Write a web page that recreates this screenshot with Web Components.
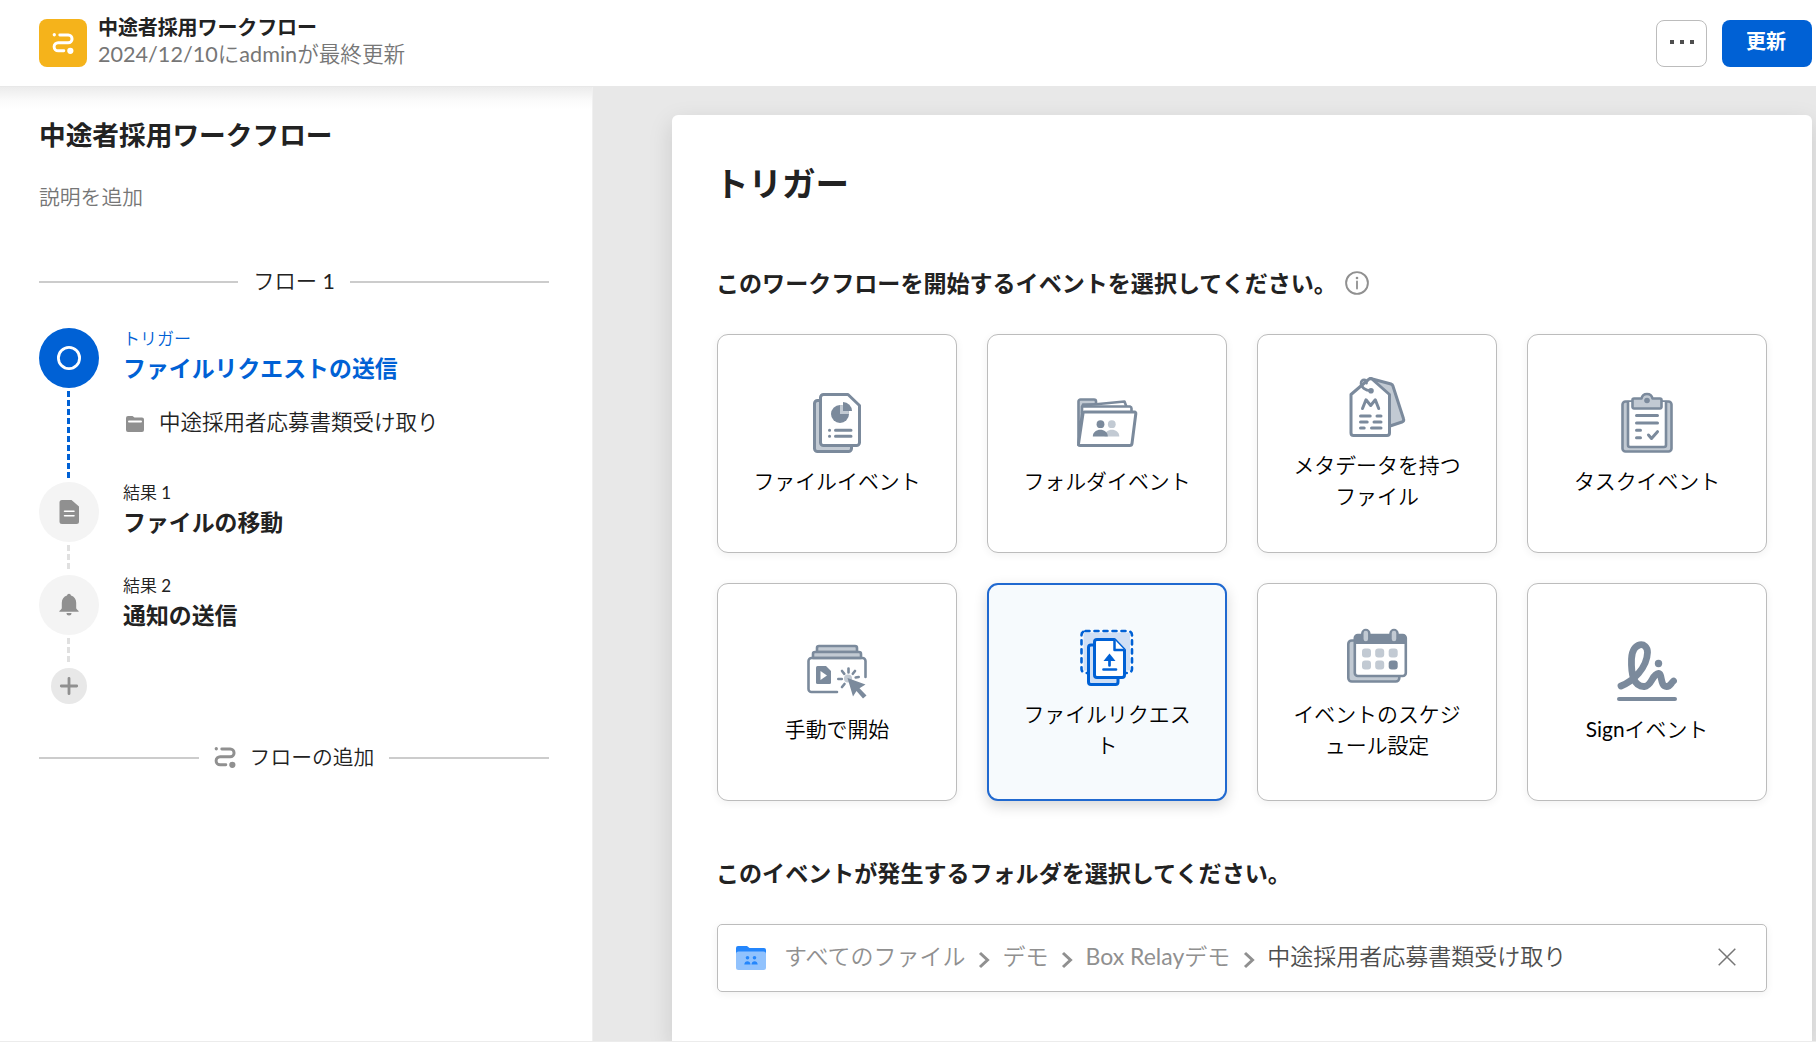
<!DOCTYPE html>
<html lang="ja">
<head>
<meta charset="utf-8">
<title>中途者採用ワークフロー</title>
<style>
  body {
    --bold-font: Lato, "Noto Sans CJK JP", sans-serif;
    margin: 0;
    height: 1042px;
    overflow: hidden;
    background: #fff;
    color: #222;
    font-family: Lato, "Noto Sans CJK JP DemiLight", "Noto Sans CJK JP Light", "Noto Sans CJK JP", sans-serif;
  }
</style>
</head>
<body>

<template id="relay-app-template">
  <style>
    :host {
      display: flex;
      flex-direction: column;
      height: 1042px;
    }
    .body {
      display: flex;
      flex: 1;
      min-height: 0;
      border-bottom: 1px solid #ececec;
    }
  </style>
  <slot name="header"></slot>
  <div class="body"><slot></slot></div>
</template>

<template id="relay-header-template">
  <style>
    :host {
      display: flex;
      align-items: center;
      box-sizing: border-box;
      height: 87px;
      flex: none;
      padding: 0 4px 0 39px;
      border-bottom: 1px solid #e8e8e8;
      background: #fff;
    }
    .logo {
      display: flex;
      align-items: center;
      justify-content: center;
      width: 48px;
      height: 48px;
      border-radius: 8px;
      background: #f5b31b;
      color: #fff;
    }
    .text {
      flex: 1;
      margin-left: 11px;
      padding-bottom: 5px;
    }
    .title {
      font-family: var(--bold-font);
      font-size: 20px;
      line-height: 26px;
      font-weight: 700;
      letter-spacing: -0.1px;
    }
    .updated {
      font-size: 21.6px;
      line-height: 28px;
      color: #767676;
    }
    .actions {
      display: flex;
      gap: 15px;
    }
  </style>
  <div class="logo"><relay-icon name="relay" size="22"></relay-icon></div>
  <div class="text">
    <div class="title"><slot name="title"></slot></div>
    <div class="updated"><slot name="updated"></slot></div>
  </div>
  <div class="actions"><slot name="actions"></slot></div>
</template>

<template id="relay-button-template">
  <style>
    :host {
      display: flex;
      align-items: center;
      justify-content: center;
      box-sizing: border-box;
      width: 51px;
      height: 47px;
      border: 1px solid #bcbcbc;
      border-radius: 8px;
      background: #fff;
      color: #4e4e4e;
      cursor: pointer;
    }
    :host([primary]) {
      width: 90px;
      padding: 0 2px 6px 0;
      border: 0;
      background: #0061d5;
      color: #fff;
      font-family: var(--bold-font);
      font-size: 20px;
      font-weight: 700;
    }
  </style>
  <slot></slot>
</template>

<template id="relay-sidebar-template">
  <style>
    :host {
      display: block;
      box-sizing: border-box;
      width: 593px;
      flex: none;
      padding: 30px 44px 0 39px;
      border-right: 1px solid #f0f0f0;
      background: linear-gradient(#ececec, #fafafa 13px, #fff 22px);
    }
    .title {
      font-family: var(--bold-font);
      font-size: 26.7px;
      line-height: 36px;
      font-weight: 700;
    }
    .description {
      margin-top: 28px;
      font-size: 20.8px;
      line-height: 32px;
      color: #767676;
    }
    .flow {
      margin: 52px -1px 0 0;
    }
  </style>
  <div class="title"><slot name="title"></slot></div>
  <div class="description"><slot name="description"></slot></div>
  <div class="flow"><slot></slot></div>
</template>

<template id="relay-divider-template">
  <style>
    :host {
      display: flex;
      align-items: center;
      height: 32px;
      gap: 15px;
      font-size: 20.8px;
      line-height: 30px;
    }
    :host::before, :host::after {
      content: "";
      flex: 1;
      height: 2px;
      margin-top: 2px;
      background: #ccc;
    }
    .label {
      display: flex;
      align-items: center;
      gap: 14px;
    }
    ::slotted(relay-icon) {
      color: #909090;
    }
  </style>
  <div class="label"><slot></slot></div>
</template>

<template id="relay-step-template">
  <style>
    :host {
      display: flex;
      box-sizing: border-box;
      height: 93px;
      --fill: #f4f4f4;
      --dash: #e0e0e0;
    }
    :host([active]) {
      height: 154px;
      --fill: #0061d5;
      --dash: #0061d5;
    }
    .rail {
      display: flex;
      flex-direction: column;
      align-items: center;
      width: 60px;
    }
    .dot {
      display: flex;
      align-items: center;
      justify-content: center;
      width: 60px;
      height: 60px;
      border-radius: 50%;
      background: var(--fill);
      color: #909090;
    }
    :host([active]) .dot {
      color: #fff;
    }
    .line {
      flex: 1;
      width: 3px;
      margin: 3px 1px 4px 0;
      background: repeating-linear-gradient(var(--dash) 0 6px, transparent 6px 9px);
    }
    .text {
      margin-left: 24px;
    }
    .label {
      font-size: 17px;
      line-height: 22px;
    }
    .name {
      font-family: var(--bold-font);
      font-size: 22.9px;
      line-height: 36px;
      font-weight: 700;
    }
    :host([active]) .label, :host([active]) .name {
      color: #0061d5;
    }
    .detail {
      display: flex;
      align-items: center;
      margin: 20px 0 0 3px;
      gap: 15px;
      font-size: 21.5px;
      line-height: 32px;
    }
    :host(:not([active])) .detail {
      display: none;
    }
  </style>
  <div class="rail">
    <div class="dot"><slot name="icon"></slot></div>
    <div class="line"></div>
  </div>
  <div class="text">
    <div class="label"><slot name="label"></slot></div>
    <div class="name"><slot></slot></div>
    <div class="detail"><slot name="detail"></slot></div>
  </div>
</template>

<template id="relay-add-template">
  <style>
    :host {
      display: flex;
      align-items: center;
      justify-content: center;
      width: 36px;
      height: 36px;
      margin: 0 0 37px 12px;
      border-radius: 50%;
      background: #e8e8e8;
      color: #909090;
    }
  </style>
  <relay-icon name="plus" size="18"></relay-icon>
</template>

<template id="relay-canvas-template">
  <style>
    :host {
      display: flex;
      flex: 1;
      padding: 28px 4px 0 79px;
      background: #e8e8e8;
      overflow: hidden;
    }
    .panel {
      flex: 1;
      box-sizing: border-box;
      padding: 45px 45px 0;
      border-radius: 6px 6px 0 0;
      background: #fff;
      box-shadow: 0 8px 24px rgba(0, 0, 0, .13);
    }
    h1 {
      margin: 0 0 0 -2px;
      font-family: var(--bold-font);
      font-size: 33.5px;
      line-height: 46px;
      font-weight: 700;
    }
  </style>
  <div class="panel">
    <h1><slot name="title"></slot></h1>
    <slot></slot>
  </div>
</template>

<template id="relay-section-template">
  <style>
    :host {
      display: block;
      margin-top: 61px;
    }
    .heading {
      display: flex;
      align-items: center;
      gap: 8px;
      height: 32px;
      margin-left: -1px;
      font-family: var(--bold-font);
      font-size: 23.05px;
      line-height: 30px;
      font-weight: 700;
      color: #222;
    }
    .content {
      margin-top: 35px;
    }
  </style>
  <div class="heading"><slot name="heading"></slot></div>
  <div class="content"><slot></slot></div>
</template>

<template id="relay-card-grid-template">
  <style>
    :host {
      display: grid;
      grid-template-columns: repeat(4, 240px);
      grid-template-rows: 219px 218px;
      gap: 30px;
    }
  </style>
  <slot></slot>
</template>

<template id="relay-card-template">
  <style>
    :host {
      display: flex;
      flex-direction: column;
      align-items: center;
      justify-content: center;
      gap: 12px;
      box-sizing: border-box;
      padding-top: 1px;
      border: 1px solid #bcbcbc;
      border-radius: 11px;
      background: #fff;
      box-shadow: 0 2px 8px rgba(0, 0, 0, .06);
      color: #000;
    }
    :host([selected]) {
      border: 2px solid #2069d0;
      background: #f6fafd;
      box-shadow: 0 5px 14px rgba(0, 0, 0, .16);
    }
    .label {
      width: 176px;
      font-size: 20.9px;
      line-height: 31px;
      text-align: center;
      line-break: loose;
    }
  </style>
  <relay-icon size="60"></relay-icon>
  <div class="label"><slot></slot></div>
</template>

<template id="relay-path-template">
  <style>
    :host {
      display: flex;
      align-items: center;
      box-sizing: border-box;
      height: 68px;
      padding: 0 30px 0 18px;
      border: 1px solid #bcbcbc;
      border-radius: 5px;
      background: #fff;
      box-shadow: 0 2px 8px rgba(0, 0, 0, .06);
      font-size: 23px;
      line-height: 32px;
      color: #909090;
    }
    .crumbs {
      display: flex;
      align-items: center;
      flex: 1;
      margin-left: 18px;
      padding-bottom: 4px;
      gap: 12.5px;
    }
    .crumbs relay-icon {
      margin-top: 7px;
    }
    .crumbs span:last-child {
      color: #4e4e4e;
    }
    .close {
      color: #767676;
      margin-bottom: 3px;
    }
  </style>
  <relay-icon name="shared-folder" size="30"></relay-icon>
  <div class="crumbs"></div>
  <relay-icon class="close" name="close" size="18"></relay-icon>
</template>

<relay-app>
  <relay-header slot="header">
    <span slot="title">中途者採用ワークフロー</span>
    <span slot="updated">2024/12/10にadminが最終更新</span>
    <relay-button slot="actions"><relay-icon name="dots" size="28"></relay-icon></relay-button>
    <relay-button slot="actions" primary>更新</relay-button>
  </relay-header>

  <relay-sidebar>
    <span slot="title">中途者採用ワークフロー</span>
    <span slot="description">説明を追加</span>
    <relay-divider style="margin-bottom: 31px; font-size: 21.3px">フロー 1</relay-divider>
    <relay-step active>
      <relay-icon slot="icon" name="ring" size="24"></relay-icon>
      <span slot="label">トリガー</span>
      ファイルリクエストの送信
      <relay-icon slot="detail" name="folder" size="18" style="color: #909090; margin-top: 3px"></relay-icon>
      <span slot="detail">中途採用者応募書類受け取り</span>
    </relay-step>
    <relay-step>
      <relay-icon slot="icon" name="file" size="24"></relay-icon>
      <span slot="label">結果 1</span>
      ファイルの移動
    </relay-step>
    <relay-step>
      <relay-icon slot="icon" name="bell" size="24"></relay-icon>
      <span slot="label">結果 2</span>
      通知の送信
    </relay-step>
    <relay-add></relay-add>
    <relay-divider><relay-icon name="relay" size="22"></relay-icon>フローの追加</relay-divider>
  </relay-sidebar>

  <relay-canvas>
    <span slot="title">トリガー</span>
    <relay-section>
      <span slot="heading">このワークフローを開始するイベントを選択してください。</span>
      <relay-icon slot="heading" name="info" size="24" style="color: #909090"></relay-icon>
      <relay-card-grid>
        <relay-card icon="file-event">ファイルイベント</relay-card>
        <relay-card icon="folder-event">フォルダイベント</relay-card>
        <relay-card icon="metadata">メタデータを持つファイル</relay-card>
        <relay-card icon="task">タスクイベント</relay-card>
        <relay-card icon="manual">手動で開始</relay-card>
        <relay-card icon="file-request" selected>ファイルリクエスト</relay-card>
        <relay-card icon="schedule">イベントのスケジュール設定</relay-card>
        <relay-card icon="sign">Signイベント</relay-card>
      </relay-card-grid>
    </relay-section>
    <relay-section style="margin-top: 56px">
      <span slot="heading">このイベントが発生するフォルダを選択してください。</span>
      <relay-path value="すべてのファイル/デモ/Box Relayデモ/中途採用者応募書類受け取り"></relay-path>
    </relay-section>
  </relay-canvas>
</relay-app>

<script>
  // [viewBox width, viewBox height, markup]
  const ICONS = {
    "relay": [24, 24, `
      <g fill="none" stroke="currentColor" stroke-width="3.2" stroke-linecap="round">
        <path d="M8.500 3.300h9.200a4.200 4.200 0 0 1 0 8.400H6.700a4.400 4.400 0 0 0 0 8.800h6.200"/>
      </g>
      <circle cx="2.500" cy="3" r="1.800" fill="currentColor"/>
      <circle cx="20" cy="20.500" r="3.400" fill="currentColor"/>`],
    "dots": [28, 8, `<path fill="currentColor" d="M2 1h4v4H2zM12 1h4v4h-4zM22 1h4v4h-4z"/>`],
    "ring": [24, 24, `<circle cx="12" cy="12" r="10.6" fill="none" stroke="currentColor" stroke-width="2.8"/>`],
    "folder": [18, 18, `
      <path fill="currentColor" d="M2 1h4.5l2 1.5H16a2 2 0 0 1 2 2V15a2 2 0 0 1-2 2H2a2 2 0 0 1-2-2V3a2 2 0 0 1 2-2z"/>
      <path d="M3 6.5h12" stroke="#fff" stroke-width="2" stroke-linecap="round"/>`],
    "file": [24, 24, `
      <path fill="currentColor" d="M5 0h9.5L22 6.5V21.500a2.500 2.500 0 0 1-2.500 2.500H5a2.500 2.500 0 0 1-2.500-2.500v-19A2.500 2.500 0 0 1 5 0z"/>
      <path d="M7.500 11.300h9.500M7.500 15.700h9.500" stroke="#fff" stroke-width="1.500" stroke-linecap="round"/>`],
    "bell": [24, 24, `
      <path fill="currentColor" d="M12 .8a2 2 0 0 1 2 1.700c3.300 1 5.200 3.600 5.200 7.300v5.500c0 1 2.600 2.200 2.600 3.500H2.200c0-1.300 2.600-2.500 2.600-3.500V9.800c0-3.700 1.900-6.300 5.200-7.300a2 2 0 0 1 2-1.700zM9.500 20h5a2.500 2.500 0 0 1-5 0z"/>`],
    "plus": [18, 18, `<path d="M9 1.300v15.400M1.300 9h15.400" stroke="currentColor" stroke-width="2.800" stroke-linecap="round"/>`],
    "info": [24, 24, `
      <circle cx="12" cy="12" r="10.900" fill="none" stroke="currentColor" stroke-width="1.900"/>
      <path d="M12 10.500v7" stroke="currentColor" stroke-width="1.800" stroke-linecap="round"/>
      <circle cx="12" cy="7" r="1.300" fill="currentColor"/>`],
    "chevron": [12, 18, `<path d="M2 2l7.500 7L2 16" fill="none" stroke="currentColor" stroke-width="3"/>`],
    "close": [18, 18, `<path d="M.7.700l16.600 16.600M17.300.700L.700 17.300" stroke="currentColor" stroke-width="1.500"/>`],
    "shared-folder": [30, 26, `
      <path fill="#2486fc" d="M2 1h9l2.500 2H28a2 2 0 0 1 2 2v8H0V3a2 2 0 0 1 2-2z"/>
      <path fill="#91c2fd" d="M0 9a2.500 2.500 0 0 1 2.500-2.500h25A2.500 2.500 0 0 1 30 9v13.500a2.500 2.500 0 0 1-2.500 2.500h-25A2.500 2.500 0 0 1 0 22.500z"/>
      <g fill="#2486fc">
        <circle cx="11.500" cy="12.800" r="1.800"/><circle cx="18.500" cy="12.800" r="1.800"/>
        <path d="M8.300 19.500c0-4.500 6.200-4.500 6.200 0zM15.500 19.500c0-4.500 6.200-4.500 6.200 0z"/>
      </g>`],
    "file-event": [60, 60, `
      <rect x="7.500" y="7.500" width="37" height="51" rx="3" class="light line"/>
      <path d="M16.500 1.500h24.500l11.500 11v37a3 3 0 0 1-3 3h-33a3 3 0 0 1-3-3v-45a3 3 0 0 1 3-3z" class="white line"/>
      <circle cx="33" cy="21" r="9" class="solid"/>
      <path d="M33 21v-9a9 9 0 0 1 9 9z" class="light"/>
      <path d="M36 18V9a9 9 0 0 1 9 9z" class="solid"/>
      <path d="M28.500 37.300h15.500M28.500 43.300h15.500M22.500 37.300h.1M22.500 43.300h.1" class="line"/>`],
    "folder-event": [60, 60, `
      <path d="M1.500 52V8.500a2 2 0 0 1 2-2H17a2 2 0 0 1 2 2v3H6z" class="light line thin"/>
      <path d="M6 12.500l41.500-4 2 5.500" class="white line thin"/>
      <path d="M5 19.500v-6h48a2 2 0 0 1 1.500 2v4" class="white line thin"/>
      <path d="M7.500 19h50c1 0 1.500.800 1.300 1.800L55 50.500c-.2 1.500-1 2-2.300 2H3c-1 0-1.700-.700-1.500-1.800L6 20.500c.1-1 .7-1.500 1.500-1.500z" class="white line"/>
      <circle cx="34.800" cy="31.200" r="3.900" class="light"/>
      <path d="M27.500 43.500c0-9 14.800-9 14.800 0z" class="light"/>
      <circle cx="23.500" cy="31.200" r="3.900" class="solid"/>
      <path d="M15.800 43.500c0-9 15-9 15 0z" class="solid"/>`],
    "metadata": [60, 60, `
      <path d="M23.500 1.500L44 7a3 3 0 0 1 2 2.300l10.500 32.500a2.500 2.500 0 0 1-1.500 3.200L43 49z" class="light line"/>
      <path d="M21.500 2.500a3 3 0 0 1 4 0L42.500 17.500V56a2.500 2.500 0 0 1-2.500 2.500H6.500A2.500 2.500 0 0 1 4 56V17.500z" class="white line"/>
      <path d="M24 13.700c-6 0-10-3.700-10-7.500 0-4.500 6.300-4.300 5.500 0" class="line thin"/>
      <circle cx="24" cy="13.700" r="2.800" class="solid"/>
      <path d="M15.500 31.500L19 22.800l4.700 5.700 4.600-5.700 3.400 8.700" class="line"/>
      <path d="M13.500 39h9.700M30 39h4M13.500 45h6.700M27 45h7M13.500 51h3.700M24.500 51h9.500" class="line"/>`],
    "task": [60, 60, `
      <rect x="5.500" y="8.500" width="49" height="50" rx="3" class="light line thin"/>
      <path d="M11 9v43a2 2 0 0 0 2 2h34a2 2 0 0 0 2-2V9" class="white line thin"/>
      <path d="M17 15.500a1.500 1.500 0 0 1-1.500-1.500V7A1.500 1.500 0 0 1 17 5.500h7.500a5.600 5.600 0 0 1 11 0H43A1.500 1.500 0 0 1 44.500 7v7a1.500 1.500 0 0 1-1.500 1.500z" class="light line thin"/>
      <circle cx="30" cy="7.500" r="2.800" class="solid"/>
      <path d="M19.500 22.500h21M19.500 30h21M19.500 37.300h4M19.500 44.700h4M31.500 42l3 3.500 6-6.800" class="line"/>`],
    "manual": [60, 60, `
      <path d="M10 11V7a2 2 0 0 1 2-2h36a2 2 0 0 1 2 2v4z" class="light line thin"/>
      <path d="M6 17v-4a2 2 0 0 1 2-2h44a2 2 0 0 1 2 2v4z" class="light line thin"/>
      <path d="M30 51H4.500a3 3 0 0 1-3-3V20a3 3 0 0 1 3-3h51a3 3 0 0 1 3 3v16" class="line thin"/>
      <path d="M10.500 25h8.500l5 5v11.500a1.500 1.500 0 0 1-1.500 1.500h-12A1.500 1.500 0 0 1 9 41.500v-15a1.500 1.500 0 0 1 1.500-1.500z" class="solid"/>
      <path d="M13.500 30v9l6.500-4.500z" class="white"/>
      <path d="M41.500 27.500v4M31.300 38h3.500M48.500 38M35 30l2.300 2.800M48 30l-2.200 2.800M35 46l2.500-3M51.700 36l-3 .5" class="line thin"/>
      <circle cx="41" cy="37.500" r="4" class="light"/>
      <path d="M40.500 37L58.500 43.500l-6 3.700 7 7.300-3.500 3-6.500-7.500-3.500 5.500z" class="solid"/>`],
    "file-request": [60, 60, `
      <rect x="6.500" y="6.500" width="46.500" height="38" fill="#cfdff5"/>
      <rect x="4.500" y="5" width="50.500" height="42" rx="4" fill="none" stroke="#0061d5" stroke-width="2.600" stroke-linecap="round" stroke-dasharray="4 5"/>
      <rect x="11.500" y="19" width="29.500" height="39.500" rx="2.500" fill="#cfdff5" stroke="#0061d5" stroke-width="3"/>
      <path d="M20 13.500h17.500L47.500 24v25a2.500 2.500 0 0 1-2.500 2.500H20a2.500 2.500 0 0 1-2.500-2.500V16a2.500 2.500 0 0 1 2.500-2.500z" fill="#fff" stroke="#0061d5" stroke-width="3" stroke-linejoin="round"/>
      <path d="M37.500 13.500V24h10" fill="#fff" stroke="#0061d5" stroke-width="2.500" stroke-linejoin="round"/>
      <path d="M32.500 27.500l6 7.500h-12z" fill="#0061d5"/>
      <path d="M32.500 33v6.500M26.500 43.500h12.500" stroke="#0061d5" stroke-width="2.700" stroke-linecap="round"/>`],
    "schedule": [60, 60, `
      <rect x="1.300" y="14.500" width="51" height="41" rx="3.500" class="light line thin"/>
      <rect x="7.800" y="9" width="51" height="41" rx="3" class="white line thin"/>
      <path d="M7.500 18v-6.500a3 3 0 0 1 3-3H56a3 3 0 0 1 3 3V18z" class="solid"/>
      <path d="M18.800 7.500v4M47 7.500v4" stroke="#7b8a9c" stroke-width="9.500" stroke-linecap="round"/>
      <path d="M18.800 7v6M47 7v6" stroke="#c2cad3" stroke-width="4.500" stroke-linecap="round"/>
      <g class="light">
        <rect x="15" y="22.500" width="9" height="9" rx="3"/><rect x="28.200" y="22.500" width="9" height="9" rx="3"/><rect x="41.700" y="22.500" width="9" height="9" rx="3"/>
        <rect x="15" y="34.500" width="9" height="9" rx="3"/><rect x="28.200" y="34.500" width="9" height="9" rx="3"/>
      </g>
      <rect x="41.700" y="34.500" width="9" height="9" rx="3" class="solid"/>`],
    "sign": [60, 60, `
      <path d="M4 45C16 40 30 27 30.500 11.500 30.500 0 15 .500 14.500 18c-.5 15 2 28 13 27.500C35 45 35 33 41.500 32.500c4 0 1.500 13 8 13 4 0 4-3 7-5.500" fill="none" stroke="#7b8a9c" stroke-width="6.800" stroke-linecap="round" stroke-linejoin="round"/>
      <circle cx="41.500" cy="22.500" r="3.700" class="solid"/>
      <path d="M2 58h56" stroke="#7b8a9c" stroke-width="4" stroke-linecap="round"/>`],
  };

  class RelayElement extends HTMLElement {
    connectedCallback() {
      if (this.shadowRoot) return;
      const template = document.getElementById(this.nodeName.toLowerCase() + "-template");
      this.attachShadow({ mode: "open" }).appendChild(template.content.cloneNode(true));
      this.ready();
    }
    ready() {}
  }

  customElements.define("relay-icon", class extends HTMLElement {
    static observedAttributes = ["name"];

    connectedCallback() {
      this.render();
    }

    attributeChangedCallback() {
      this.render();
    }

    render() {
      const icon = ICONS[this.getAttribute("name")];
      if (!icon) return;
      const [w, h, markup] = icon;
      const size = Number(this.getAttribute("size") || w);
      const root = this.shadowRoot || this.attachShadow({ mode: "open" });
      root.innerHTML = `
        <style>
          :host { display: inline-flex; flex: none; }
          svg { display: block; overflow: visible; }
          .line { fill: none; stroke: #7b8a9c; stroke-width: 3; stroke-linecap: round; stroke-linejoin: round; }
          .thin { stroke-width: 2.600; }
          .solid { fill: #7b8a9c; }
          .light { fill: #c2cad3; }
          .white { fill: #fff; }
        </style>
        <svg width="${size}" height="${size * h / w}" viewBox="0 0 ${w} ${h}" aria-hidden="true">${markup}</svg>`;
    }
  });

  customElements.define("relay-card", class extends RelayElement {
    ready() {
      this.shadowRoot.querySelector("relay-icon").setAttribute("name", this.getAttribute("icon"));
    }
  });

  customElements.define("relay-path", class extends RelayElement {
    ready() {
      const crumbs = this.shadowRoot.querySelector(".crumbs");
      this.getAttribute("value").split("/").forEach((folder, i) => {
        if (i > 0) {
          const chevron = document.createElement("relay-icon");
          chevron.setAttribute("name", "chevron");
          crumbs.appendChild(chevron);
        }
        const crumb = document.createElement("span");
        crumb.textContent = folder;
        crumbs.appendChild(crumb);
      });
    }
  });

  [
    "relay-app", "relay-header", "relay-button", "relay-sidebar", "relay-divider",
    "relay-step", "relay-add", "relay-canvas", "relay-section", "relay-card-grid",
  ].forEach((name) => customElements.define(name, class extends RelayElement {}));
</script>
</body>
</html>
